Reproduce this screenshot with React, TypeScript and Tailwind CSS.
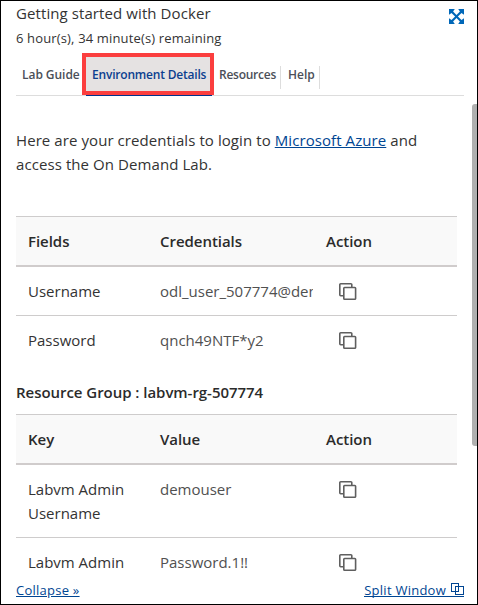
import React from "react";

function CopyIcon() {
  return (
    <svg width="18" height="18" viewBox="0 0 18 18" fill="none" stroke="#5f5f5f" strokeWidth="1.6" className="block">
      <path d="M4.5 12.7H1.7a.9.9 0 0 1-.9-.9V1.7a.9.9 0 0 1 .9-.9h10.2a.9.9 0 0 1 .9.9v2.3" />
      <rect x="4.8" y="4.5" width="11.8" height="11.8" rx="0.8" />
    </svg>
  );
}

function ExpandIcon() {
  return (
    <svg width="15" height="15" viewBox="0 0 15 15" fill="#0067b8" className="block">
      <path d="M0 0h5.8L4.1 2.5l3.4 3.6 3.4-3.6L9.2 0H15v5.8l-2.5-1.7-3.6 3.4 3.6 3.4L15 9.2V15H9.2l1.7-2.5-3.4-3.6-3.4 3.6L5.8 15H0V9.2l2.5 1.7 3.6-3.4-3.6-3.4L0 5.8z" />
    </svg>
  );
}

function SplitIcon() {
  return (
    <svg width="13" height="12" viewBox="0 0 13 12" fill="none" stroke="#004592" className="block">
      <rect x="0.5" y="0.5" width="7" height="8" />
      <rect x="4.5" y="3.5" width="8" height="8" />
    </svg>
  );
}

type Row = { label: string[]; value: string };

function Table({ heads, rows }: { heads: string[]; rows: Row[] }) {
  return (
    <div className="w-[441px] border-t border-[#cecccc]">
      <div className="grid h-[50px] grid-cols-[132px_166px_1fr] border-b-2 border-[#d0cccc] bg-[#f9f9f9] pl-3 pt-3 font-semibold leading-6 tracking-[-0.04px] text-[#2b2b2b]">
        {heads.map((h) => (
          <div key={h}>{h}</div>
        ))}
      </div>
      {rows.map((r, i) => (
        <div
          key={i}
          className={"grid grid-cols-[132px_178px_1fr] py-3 pl-3 leading-6 " + (i < rows.length - 1 ? "border-b border-[#cecccc]" : "")}
        >
          <div className="text-[#333333]">
            {r.label.map((l) => (
              <div key={l} className="whitespace-nowrap">{l}</div>
            ))}
          </div>
          <div className="h-6 w-[153px] overflow-hidden whitespace-nowrap text-[#505050]">{r.value}</div>
          <div className="pl-px pt-[4px]"><CopyIcon /></div>
        </div>
      ))}
    </div>
  );
}

export default function App() {
  return (
    <div className="relative flex h-[605px] w-[478px] flex-col overflow-hidden border border-black bg-white font-['Open_Sans','Noto_Sans',sans-serif] text-[15px] text-[#333333]">
      <header className="flex h-[95px] shrink-0 flex-col pl-[15px] pr-[13px]">
        <div className="flex h-[25px] justify-between">
          <div className="whitespace-nowrap leading-6 tracking-[0.09px]">Getting started with Docker</div>
          <div className="pt-2"><ExpandIcon /></div>
        </div>
        <div className="whitespace-nowrap text-[13px] leading-6 tracking-[0.15px]">6 hour(s), 34 minute(s) remaining</div>
        <nav className="mt-[7px] flex h-[39px] border-b border-[#dddddd] text-[12px] font-semibold leading-[36px] text-[#4b4f58]">
          <div className="w-[70px] whitespace-nowrap pl-[6px] tracking-[-0.05px]">Lab Guide</div>
          <div className="relative h-[39px] w-[126px] whitespace-nowrap border-b border-[#00338d] bg-[#e5e2e2] pl-[6px] tracking-[-0.2px] text-[#0b408f]">
            Environment Details
            <div className="absolute -left-1 -top-[4px] h-[42px] w-[132px] border-4 border-[#fb3e3e]" />
          </div>
          <div className="my-[9px] h-[23px] w-[69px] whitespace-nowrap border-r border-[#dddddd] pl-[7px] leading-[18px] tracking-[-0.25px]">Resources</div>
          <div className="my-[9px] h-[23px] w-[39px] whitespace-nowrap border-r border-[#dddddd] pl-[7px] leading-[18px]">Help</div>
        </nav>
      </header>
      <main className="h-[479px] shrink-0 overflow-hidden pl-[15px] pt-[32px]">
        <p className="whitespace-nowrap leading-6 tracking-[0.08px]">
          <span>Here are your credentials to login to </span>
          <a className="text-[#004592] underline underline-offset-1">Microsoft Azure</a>
          <span> and</span>
          <br />
          <span>access the On Demand Lab.</span>
        </p>
        <div className="mt-10">
          <Table
            heads={["Fields", "Credentials", "Action"]}
            rows={[
              { label: ["Username"], value: "odl_user_507774@demo" },
              { label: ["Password"], value: "qnch49NTF*y2" },
            ]}
          />
        </div>
        <h2 className="mb-[10px] mt-4 whitespace-nowrap font-semibold leading-6 tracking-[-0.04px] text-[#2b2b2b]">Resource Group : labvm-rg-507774</h2>
        <Table
          heads={["Key", "Value", "Action"]}
          rows={[
            { label: ["Labvm Admin", "Username"], value: "demouser" },
            { label: ["Labvm Admin"], value: "Password.1!!" },
          ]}
        />
      </main>
      <footer className="flex h-[29px] shrink-0 justify-between pl-[15px] pr-[13px] pt-[5px] text-[13px] leading-5 tracking-[0.25px] text-[#004592]">
        <a className="underline underline-offset-1">Collapse »</a>
        <a className="flex h-[17px] gap-[5px] border-b border-[#004592]">
          <span className="leading-5">Split Window</span>
          <span className="pt-[3px]"><SplitIcon /></span>
        </a>
      </footer>
      <div className="absolute right-0 top-[103px] h-[342px] w-[5px] rounded-l-[3px] bg-[#b0b0b0]" />
    </div>
  );
}
